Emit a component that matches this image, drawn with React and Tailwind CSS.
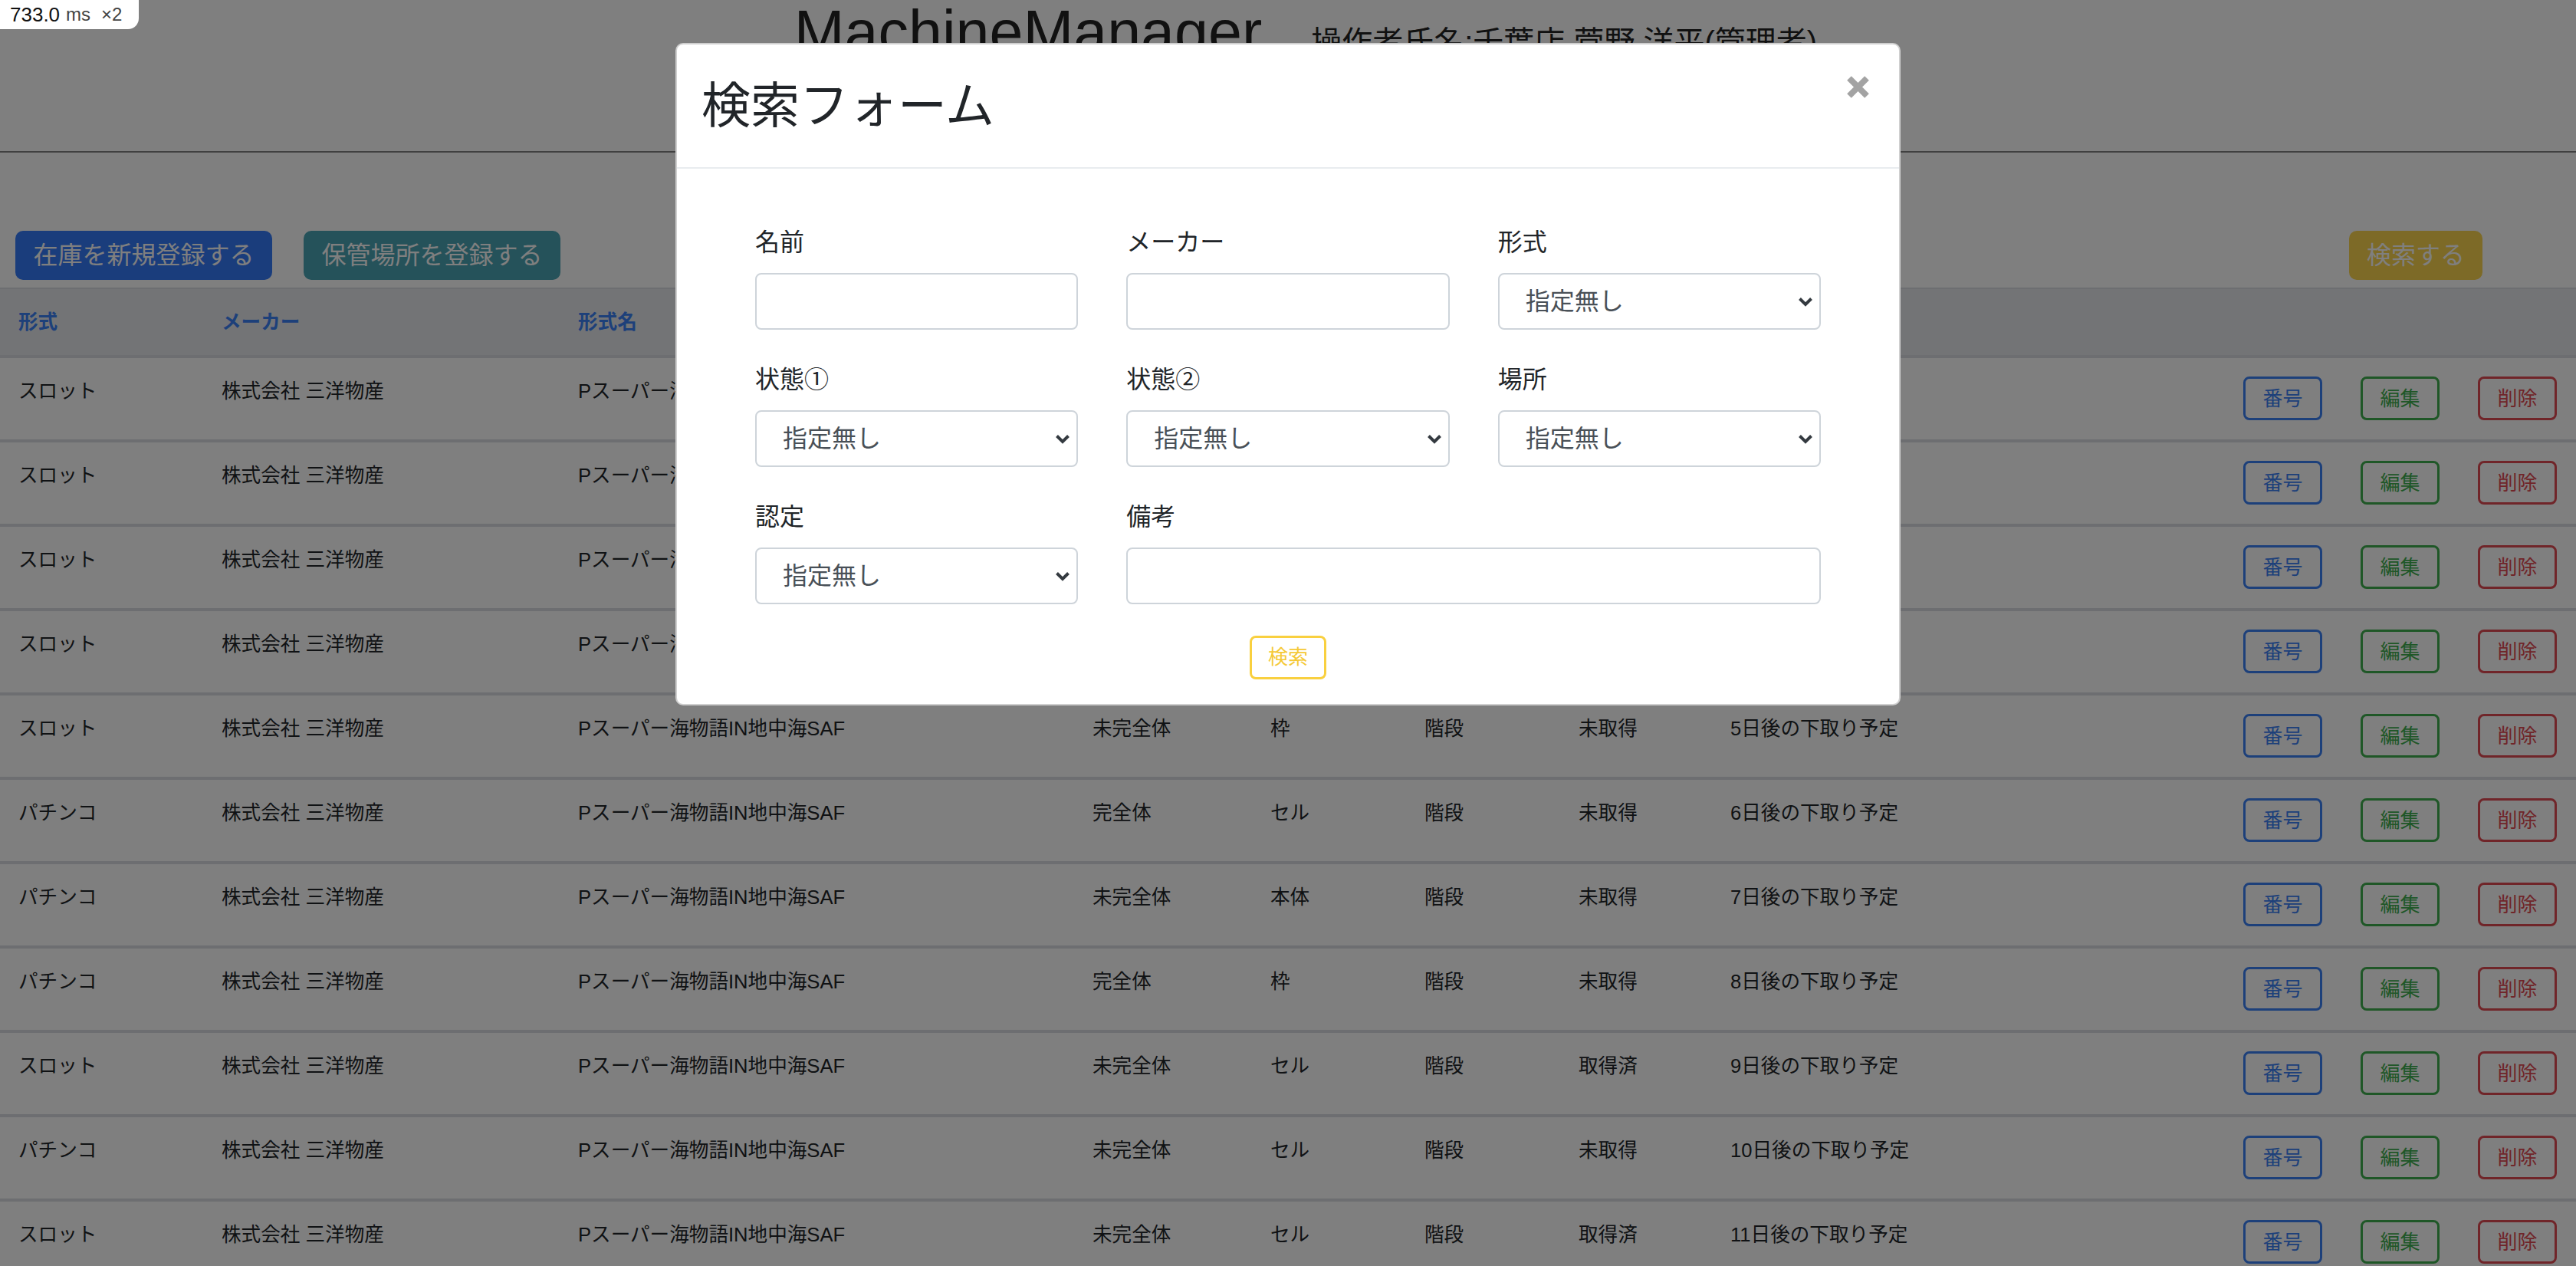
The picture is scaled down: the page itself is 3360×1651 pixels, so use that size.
const rows = [
  ['スロット', '未完全体', '枠', '階段', '未取得', '1日後の下取り予定'],
  ['スロット', '完全体', 'セル', '階段', '未取得', '2日後の下取り予定'],
  ['スロット', '未完全体', '本体', '階段', '未取得', '3日後の下取り予定'],
  ['スロット', '完全体', '枠', '階段', '取得済', '4日後の下取り予定'],
  ['スロット', '未完全体', '枠', '階段', '未取得', '5日後の下取り予定'],
  ['パチンコ', '完全体', 'セル', '階段', '未取得', '6日後の下取り予定'],
  ['パチンコ', '未完全体', '本体', '階段', '未取得', '7日後の下取り予定'],
  ['パチンコ', '完全体', '枠', '階段', '未取得', '8日後の下取り予定'],
  ['スロット', '未完全体', 'セル', '階段', '取得済', '9日後の下取り予定'],
  ['パチンコ', '未完全体', 'セル', '階段', '未取得', '10日後の下取り予定'],
  ['スロット', '未完全体', 'セル', '階段', '取得済', '11日後の下取り予定'],
];

const cols = 'grid grid-cols-[265px_465px_671px_232px_201px_201px_198px_567px_1fr]';

const Chevron = () => (
  <svg width="20" height="13" viewBox="0 0 20 13" fill="none">
    <polyline points="2.5,2.5 10,10 17.5,2.5" stroke="#343a40" strokeWidth="4" />
  </svg>
);

const Field = ({ label, select, className = '' }) => (
  <div className={className}>
    <div className="text-[32px] leading-[48px] mb-[16px] text-[#212529]">{label}</div>
    {select ? (
      <div className="h-[74px] border-2 border-[#ced4da] rounded-[8px] bg-white flex items-center justify-between pl-[34px] pr-[8px] text-[32px] text-[#495057]">
        <span>指定無し</span>
        <Chevron />
      </div>
    ) : (
      <div className="h-[74px] border-2 border-[#ced4da] rounded-[8px] bg-white" />
    )}
  </div>
);

const OutlineBtn = ({ color, children }) => (
  <div className={`w-[103px] h-[57px] border-[3px] rounded-[8px] flex items-center justify-center text-[26px] ${color}`}>
    {children}
  </div>
);

export default function App() {
  return (
    <div className="relative h-screen w-full overflow-hidden bg-white text-[#212529] font-['Liberation_Sans','Noto_Sans_CJK_JP',sans-serif]">
      {/* page */}
      <div className="h-[199px] border-b-2 border-[#808080] flex justify-center items-baseline pl-[46px] pt-[2px]">
        <h1 className="text-[79px] leading-none text-[#222]">MachineManager</h1>
        <span className="ml-[64px] text-[40px] text-[#222]">操作者氏名:千葉店 菅野 洋平(管理者)</span>
      </div>

      <div className="flex items-center mt-[102px] h-[64px] pl-[20px] pr-[122px]">
        <div className="flex gap-[41px]">
          <div className="w-[335px] h-[64px] rounded-[10px] bg-[#347af8] text-white text-[32px] flex items-center justify-center">在庫を新規登録する</div>
          <div className="w-[335px] h-[64px] rounded-[10px] bg-[#4aa4b4] text-white text-[32px] flex items-center justify-center">保管場所を登録する</div>
        </div>
        <div className="ml-auto w-[174px] h-[64px] rounded-[10px] bg-[#fbd44e] text-white text-[32px] flex items-center justify-center">検索する</div>
      </div>

      <div className="mt-[10px]">
        <div className={`${cols} h-[92px] bg-[#e6e8ec] border-t-2 border-b-4 border-[#dadde2] text-[25.6px] leading-[38px] font-bold text-[#3a80f5]`}>
          {['形式', 'メーカー', '形式名', '状態①', '状態②', '場所', '認定', '備考', ''].map((h, i) => (
            <div key={i} className="pl-[24px] pt-[24px]">{h}</div>
          ))}
        </div>
        {rows.map((r, i) => (
          <div key={i} className={`${cols} h-[110px] border-b-4 border-[#dadde2] text-[25.6px] leading-[38px]`}>
            <div className="pl-[24px] pt-[24px]">{r[0]}</div>
            <div className="pl-[24px] pt-[24px]">株式会社 三洋物産</div>
            <div className="pl-[24px] pt-[24px]">Pスーパー海物語IN地中海SAF</div>
            <div className="pl-[24px] pt-[24px]">{r[1]}</div>
            <div className="pl-[24px] pt-[24px]">{r[2]}</div>
            <div className="pl-[24px] pt-[24px]">{r[3]}</div>
            <div className="pl-[24px] pt-[24px]">{r[4]}</div>
            <div className="pl-[24px] pt-[24px] whitespace-nowrap">{r[5]}</div>
            <div className="flex justify-end gap-[50px] pr-[25px] pt-[24px]">
              <OutlineBtn color="border-[#3a80f5] text-[#3a80f5]">番号</OutlineBtn>
              <OutlineBtn color="border-[#3fae4f] text-[#3fae4f]">編集</OutlineBtn>
              <OutlineBtn color="border-[#e04a52] text-[#e04a52]">削除</OutlineBtn>
            </div>
          </div>
        ))}
      </div>

      {/* backdrop */}
      <div className="absolute inset-0 bg-black/50" />

      {/* modal */}
      <div className="absolute inset-0 pt-[56px]">
        <div className="mx-auto w-[1598px] bg-white border-2 border-[#cfcfcf] rounded-[10px]">
          <div className="flex justify-between items-start p-[32px] border-b-2 border-[#e9ecef]">
            <h2 className="text-[64px] leading-[96px] text-[#212529]">検索フォーム</h2>
            <svg className="mt-[8px] mr-[6px]" width="31" height="31" viewBox="0 0 31 31">
              <line x1="4" y1="4" x2="27" y2="27" stroke="#a3a3a3" strokeWidth="8" />
              <line x1="27" y1="4" x2="4" y2="27" stroke="#a3a3a3" strokeWidth="8" />
            </svg>
          </div>
          <div className="pt-[72px] pb-[32px]">
            <div className="w-[1390px] mx-auto grid grid-cols-3 gap-x-[63px] gap-y-[41px]">
              <Field label="名前" />
              <Field label="メーカー" />
              <Field label="形式" select />
              <Field label="状態①" select />
              <Field label="状態②" select />
              <Field label="場所" select />
              <Field label="認定" select />
              <Field label="備考" className="col-span-2" />
            </div>
            <div className="mt-[41px] mx-auto w-[100px] h-[57px] border-[3px] border-[#f9d03f] rounded-[8px] flex items-center justify-center text-[26px] text-[#f5c936]">検索</div>
          </div>
        </div>
      </div>

      {/* timing badge */}
      <div className="absolute top-0 left-0 w-[181px] h-[38px] bg-white rounded-br-[14px] flex items-center pl-[13px] gap-[8px]">
        <span className="text-[26px] leading-none text-[#111]">733.0</span>
        <span className="text-[24px] leading-none text-[#444]">ms</span>
        <span className="text-[24px] leading-none text-[#444] ml-[6px]">×2</span>
      </div>
    </div>
  );
}
